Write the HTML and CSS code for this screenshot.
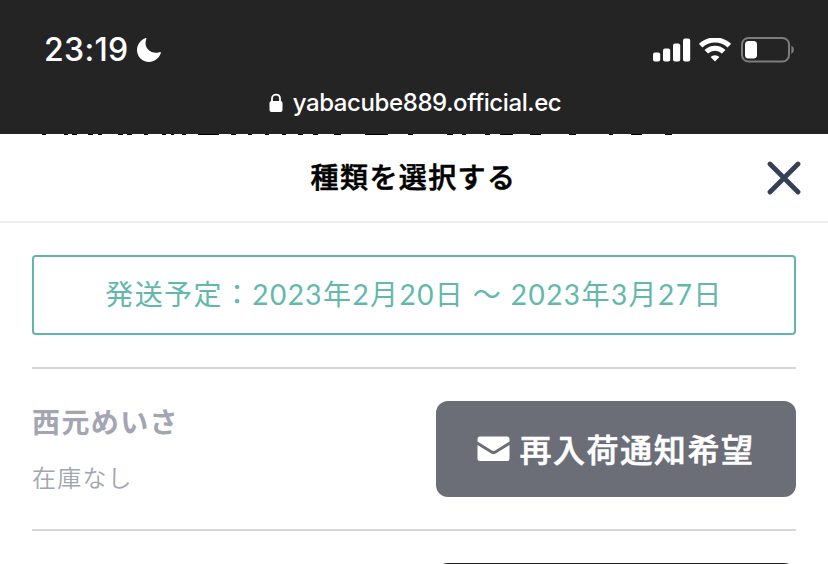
FILE: index.html
```
<!DOCTYPE html>
<html lang="ja">
<head>
    <meta charset="UTF-8">
    <title>種類を選択する</title>
    <link rel="stylesheet" href="styles.css">
</head>
<body>

    <div class="browser">
        <div class="status">
            <span class="time">23:19</span>
            <svg class="moon" width="26" height="26" viewBox="0 0 26 26"><path fill="#fff" d="M9.2 1.2C10 .7 10.7 1.2 10.3 2.2C9 5.6 9.4 9.7 12.2 12.6C15.2 15.7 19.7 16.5 23.4 15.2C24.5 14.8 25.2 15.5 24.7 16.6C22.8 21.6 18.3 24.9 13.1 24.9C6.3 24.9 1 19.6 1 12.9C1 7.900 4.2 3.200 9.200 1.200Z"/></svg>
            <svg class="signal" width="38" height="24" viewBox="0 0 38 24" fill="#fff">
                <rect x="0" y="14.500" width="7.200" height="9" rx="2"/>
                <rect x="10" y="10.500" width="7.200" height="13" rx="2"/>
                <rect x="20" y="5.500" width="7.200" height="18" rx="2"/>
                <rect x="30" y="0.500" width="7.200" height="23" rx="2"/>
            </svg>
            <svg class="wifi" width="32" height="24" viewBox="0 0 32 24">
                <path fill="none" stroke="#fff" stroke-width="5" d="M1.700 7.700A20.500 20.500 0 0 1 30.300 7.700M7.300 13.800A12.300 12.300 0 0 1 24.700 13.800"/>
                <path fill="#fff" d="M16 23.500L11.600 19.100A6.200 6.200 0 0 1 20.400 19.100Z"/>
            </svg>
            <svg class="battery" width="54" height="26" viewBox="0 0 54 26">
                <rect x="1" y="1" width="47" height="23.500" rx="6.500" fill="none" stroke="#7d7d7d" stroke-width="2"/>
                <rect x="4" y="4" width="12" height="17.500" rx="3.500" fill="#fff"/>
                <path fill="#7d7d7d" d="M50.300 8.500Q53 10 53 12.750Q53 15.500 50.300 17Z"/>
            </svg>
        </div>
        <div class="address">
            <svg width="14" height="20" viewBox="0 0 14 20">
                <rect x="0.500" y="8" width="13" height="11" rx="2" fill="#fff"/>
                <path fill="none" stroke="#fff" stroke-width="1.800" d="M3 9V5.500C3 .4 11 .4 11 5.500V9"/>
            </svg>
            <span>yabacube889.official.ec</span>
        </div>
    </div>

    <div class="sheet">
        <!-- 後ろのページの文字がわずかに見える部分 -->
        <svg class="behind" width="828" height="1" viewBox="0 0 828 1"><path fill="#000" d="M42 0h4v1h-4zM64 0h4v1h-4zM72 0h5v1h-5zM88 0h5v1h-5zM98 0h4v1h-4zM118 0h5v1h-5zM127 0h5v1h-5zM144 0h4v1h-4zM162 0h4v1h-4zM171 0h3v1h-3zM182 0h4v1h-4zM198 0h21v1h-21zM231 0h5v1h-5zM248 0h4v1h-4zM265 0h4v1h-4zM282 0h4v1h-4zM298 0h5v1h-5zM313 0h5v1h-5zM334 0h7v1h-7zM365 0h23v1h-23zM408 0h5v1h-5zM447 0h6v1h-6zM462 0h4v1h-4zM485 0h5v1h-5zM500 0h13v1h-13zM530 0h11v1h-11zM569 0h7v1h-7zM609 0h4v1h-4zM631 0h11v1h-11zM665 0h7v1h-7z"/></svg>
        <div class="sheet-head">
            <h1>種類を選択する</h1>
            <svg class="close" width="34" height="34" viewBox="0 0 34 34"><path stroke="#364156" stroke-width="4.800" stroke-linecap="round" d="M3 3L31 31M31 3L3 31"/></svg>
        </div>
        <div class="content">
            <div class="schedule">発送予定：2023年2月20日 〜 2023年3月27日</div>
            <div class="row">
                <div class="info">
                    <div class="name">西元めいさ</div>
                    <div class="stock">在庫なし</div>
                </div>
                <button>
                    <svg width="33" height="26" viewBox="0 0 33 26" fill="#fff">
                        <path d="M3 .500H30Q32.500 .500 32.500 3V5.500L18.500 14.300Q16.500 15.500 14.500 14.300L.500 5.500V3Q.500 .500 3 .500Z"/>
                        <path d="M.500 8.900L14.300 17.500Q16.500 18.800 18.700 17.500L32.500 8.900V22.500Q32.500 25 30 25H3Q.500 25 .500 22.500Z"/>
                    </svg>
                    <span>再入荷通知希望</span>
                </button>
            </div>
            <div class="row last">
                <button class="dark"></button>
            </div>
        </div>
    </div>

</body>
</html>
```

FILE: styles.css
```
* {
    box-sizing: border-box;
}
body {
    margin: 0;
    height: 564px;
    overflow: hidden;
    background: #fff;
    font-family: Lato, 'Noto Sans CJK JP', sans-serif;
}
svg {
    display: block;
    flex-shrink: 0;
}
.browser {
    height: 134px;
    background: #242424;
    color: #fff;
    font-family: Inter, sans-serif;
}
.status {
    display: flex;
    align-items: center;
    height: 82px;
    padding: 18px 33px 0 44px;
}
.time {
    font-size: 32px;
    font-weight: 500;
    line-height: 40px;
    letter-spacing: 0.3px;
    width: 92px;
}
.signal {
    margin-left: auto;
}
.wifi {
    margin: 0 10px 0 8px;
}
.address {
    display: flex;
    align-items: center;
    justify-content: center;
    gap: 10px;
    height: 41px;
    padding-left: 2px;
    font-size: 24px;
    font-weight: 500;
    letter-spacing: -0.4px;
}
.sheet-head {
    position: relative;
    height: 88px;
    border-bottom: 2px solid #efeff0;
}
h1 {
    margin: 0;
    padding-right: 1px;
    text-align: center;
    font-size: 28px;
    font-weight: 500;
    -webkit-text-stroke: 0.6px #000;
    line-height: 85px;
    letter-spacing: 1.4px;
    color: #000;
}
.close {
    position: absolute;
    right: 27px;
    top: 26px;
}
.content {
    padding: 32px 32px 0;
}
.schedule {
    height: 80px;
    margin-bottom: 32px;
    border: 2px solid #62b5aa;
    border-radius: 4px;
    line-height: 75px;
    text-align: center;
    font-size: 28px;
    letter-spacing: 1.42px;
    color: #62b8aa;
    white-space: nowrap;
}
.row {
    display: flex;
    justify-content: space-between;
    height: 162px;
    padding-top: 32px;
    border-top: 2px solid #d6d6d6;
}
.last {
    height: 35px;
    overflow: hidden;
}
.name {
    font-size: 28px;
    font-weight: 700;
    line-height: 42px;
    letter-spacing: 1.4px;
    color: #a2a5b2;
}
.stock {
    margin-top: 16px;
    font-family: 'Noto Sans CJK JP', sans-serif;
    font-size: 24px;
    font-weight: 350;
    line-height: 36px;
    letter-spacing: 1.2px;
    color: #a2a5b2;
}
button {
    display: flex;
    align-items: center;
    justify-content: center;
    gap: 9px;
    width: 360px;
    height: 96px;
    padding: 0;
    border: none;
    border-radius: 12px;
    background: #6b6e77;
    color: #fff;
    font-family: 'Noto Sans CJK JP', sans-serif;
    font-size: 32px;
    font-weight: 500;
    -webkit-text-stroke: 0.6px #fff;
    letter-spacing: 1.6px;
}
button span {
    margin-top: -2px;
}
.dark {
    margin-left: auto;
    background: #222;
}
```
